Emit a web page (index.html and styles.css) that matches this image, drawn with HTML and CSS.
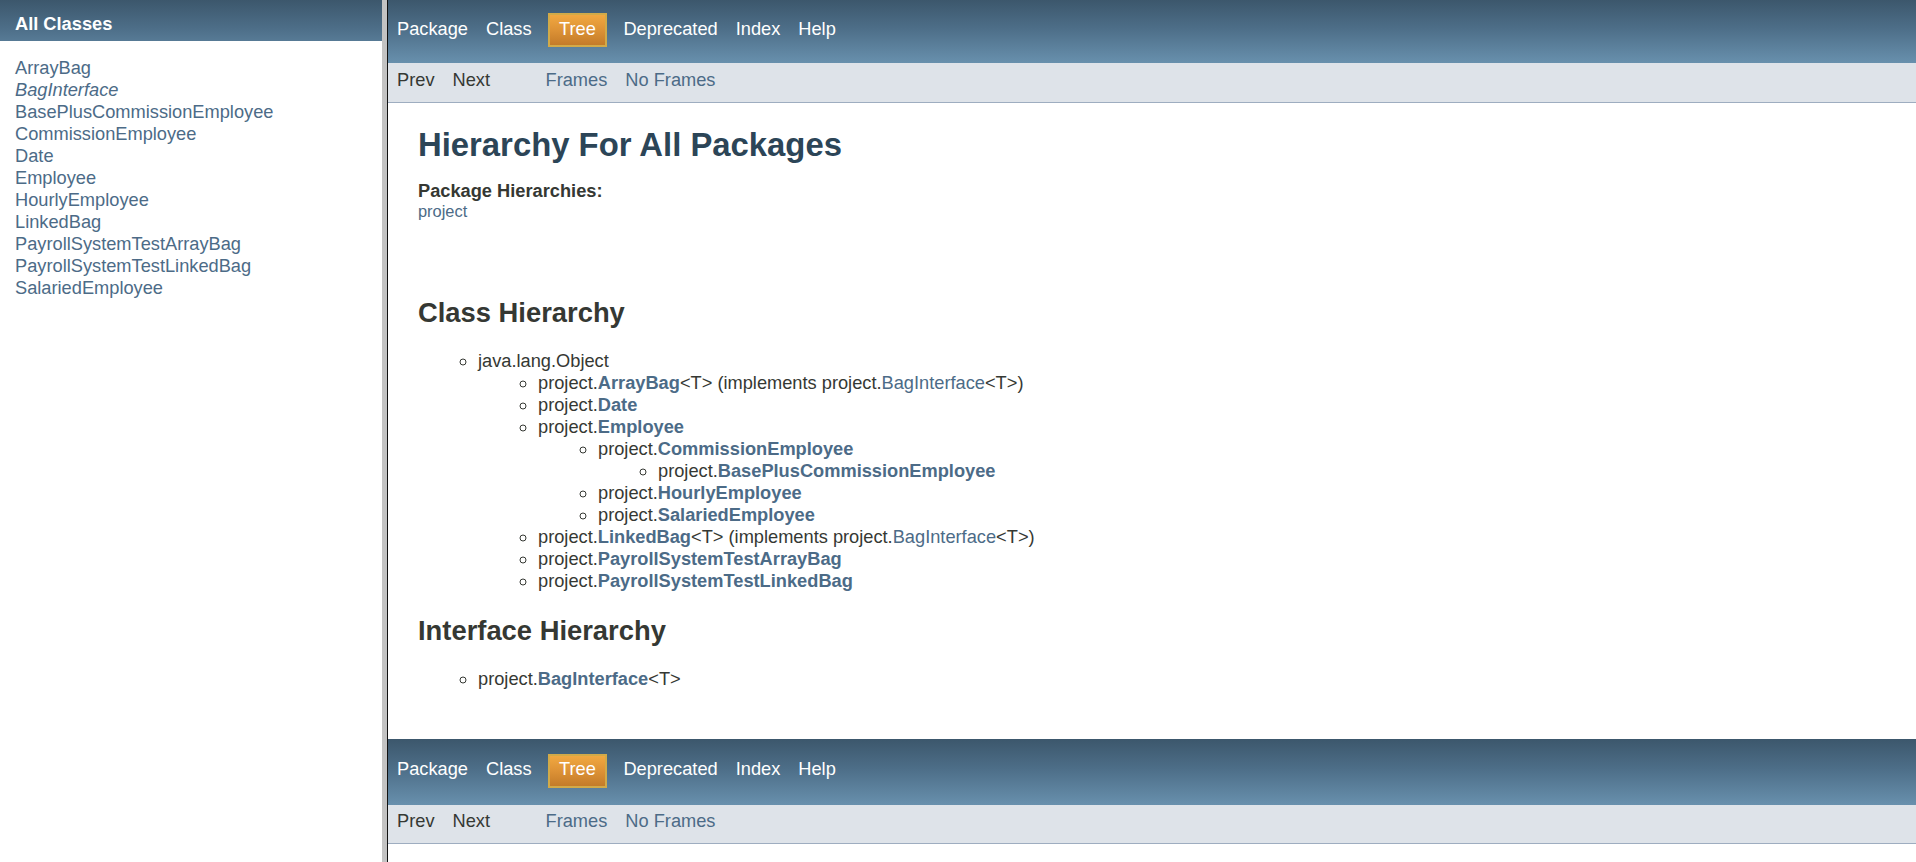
FILE: index.html
```html
<!DOCTYPE html>
<html>
<head>
<meta charset="utf-8">
<title>Class Hierarchy</title>
<link rel="stylesheet" href="styles.css">
</head>
<body>
<div class="frameset">
  <div class="frame-left">
    <h1 class="bar">All Classes</h1>
    <ul class="index-list">
      <li><a href="#">ArrayBag</a></li>
      <li><a href="#" class="iface">BagInterface</a></li>
      <li><a href="#">BasePlusCommissionEmployee</a></li>
      <li><a href="#">CommissionEmployee</a></li>
      <li><a href="#">Date</a></li>
      <li><a href="#">Employee</a></li>
      <li><a href="#">HourlyEmployee</a></li>
      <li><a href="#">LinkedBag</a></li>
      <li><a href="#">PayrollSystemTestArrayBag</a></li>
      <li><a href="#">PayrollSystemTestLinkedBag</a></li>
      <li><a href="#">SalariedEmployee</a></li>
    </ul>
  </div>
  <div class="frame-divider"></div>
  <div class="frame-right">
    <div class="top-nav">
      <ul class="nav-list">
        <li>Package</li>
        <li>Class</li>
        <li class="nav-current">Tree</li>
        <li>Deprecated</li>
        <li>Index</li>
        <li>Help</li>
      </ul>
    </div>
    <div class="sub-nav">
      <ul class="sub-list">
        <li>Prev</li>
        <li>Next</li>
      </ul>
      <ul class="sub-list">
        <li><a href="#">Frames</a></li>
        <li><a href="#">No Frames</a></li>
      </ul>
    </div>
    <div class="header">
      <h1 class="title">Hierarchy For All Packages</h1>
      <span class="strong">Package Hierarchies:</span>
      <ul class="horizontal">
        <li><a href="#">project</a></li>
      </ul>
    </div>
    <div class="content">
      <h2 class="section-title section-class">Class Hierarchy</h2>
      <ul class="tree">
        <li>java.lang.Object
          <ul class="tree">
            <li>project.<a href="#" class="cls">ArrayBag</a>&lt;T&gt; (implements project.<a href="#">BagInterface</a>&lt;T&gt;)</li>
            <li>project.<a href="#" class="cls">Date</a></li>
            <li>project.<a href="#" class="cls">Employee</a>
              <ul class="tree">
                <li>project.<a href="#" class="cls">CommissionEmployee</a>
                  <ul class="tree">
                    <li>project.<a href="#" class="cls">BasePlusCommissionEmployee</a></li>
                  </ul>
                </li>
                <li>project.<a href="#" class="cls">HourlyEmployee</a></li>
                <li>project.<a href="#" class="cls">SalariedEmployee</a></li>
              </ul>
            </li>
            <li>project.<a href="#" class="cls">LinkedBag</a>&lt;T&gt; (implements project.<a href="#">BagInterface</a>&lt;T&gt;)</li>
            <li>project.<a href="#" class="cls">PayrollSystemTestArrayBag</a></li>
            <li>project.<a href="#" class="cls">PayrollSystemTestLinkedBag</a></li>
          </ul>
        </li>
      </ul>
      <h2 class="section-title">Interface Hierarchy</h2>
      <ul class="tree">
        <li>project.<a href="#" class="cls">BagInterface</a>&lt;T&gt;</li>
      </ul>
    </div>
    <div class="bottom-nav">
      <ul class="nav-list">
        <li>Package</li>
        <li>Class</li>
        <li class="nav-current">Tree</li>
        <li>Deprecated</li>
        <li>Index</li>
        <li>Help</li>
      </ul>
    </div>
    <div class="sub-nav sub-nav-bottom">
      <ul class="sub-list">
        <li>Prev</li>
        <li>Next</li>
      </ul>
      <ul class="sub-list">
        <li><a href="#">Frames</a></li>
        <li><a href="#">No Frames</a></li>
      </ul>
    </div>
  </div>
</div>
</body>
</html>
```

FILE: styles.css
```css
html, body {
  margin: 0;
  padding: 0;
  height: 100%;
  overflow: hidden;
}

body {
  background: #ffffff;
  color: #353833;
  font-family: "Liberation Sans", Arial, Helvetica, sans-serif;
  font-size: 18.24px;
  line-height: 21.8px;
}

a {
  color: #4c6b87;
  text-decoration: none;
}

ul {
  margin: 0;
  padding: 0;
}

.frameset {
  display: flex;
  height: 100%;
}

.frame-left {
  width: 382px;
  flex: none;
  overflow: hidden;
}

.frame-divider {
  width: 5px;
  flex: none;
  background: #c3c3c3;
  border-right: 1px solid #111111;
}

.frame-right {
  flex: 1;
  overflow: hidden;
}

/* left frame */
.bar {
  margin: 0;
  height: 21px;
  padding: 13px 9px 7px 15px;
  font-size: 18.24px;
  font-weight: bold;
  line-height: 21px;
  color: #ffffff;
  background: linear-gradient(to bottom, #3c576c 0%, #4d6e88 45%, #6890ad 100%);
  background-size: 100% 63px;
  background-repeat: no-repeat;
}

.index-list {
  margin: 16px 15px;
  list-style: none;
  line-height: 22px;
}

.index-list li {
  white-space: nowrap;
}

.iface {
  font-style: italic;
}

/* nav bars */
.top-nav,
.bottom-nav {
  background: linear-gradient(to bottom, #3c576c 0%, #4d6e88 45%, #6890ad 100%);
  color: #ffffff;
  display: flex;
  align-items: flex-start;
}

.top-nav {
  height: 50px;
  padding-top: 13px;
}

.bottom-nav {
  height: 51px;
  padding-top: 15px;
  margin-top: 15px;
}

.nav-list {
  display: flex;
  align-items: center;
  list-style: none;
  height: 34px;
}

.nav-list li {
  padding: 2.5px 9px 6.5px;
  line-height: 21px;
}

.nav-list .nav-current {
  margin: 0 7.5px;
  padding: 2.5px 9px 6.5px;
  border: 2px solid #d2aa48;
  background: linear-gradient(to bottom, #f1a840 0%, #dd9236 50%, #c37b29 100%);
}

.sub-nav {
  display: flex;
  height: 33px;
  padding: 1.5px 0 4.5px;
  background: #dee3e9;
  border-bottom: 1px solid #9eadc0;
}

.sub-nav-bottom {
  height: 33px;
  padding: 1px 0 4px;
}

.sub-list {
  display: flex;
  list-style: none;
  margin-right: 37.5px;
}

.sub-list li {
  padding: 4.5px 9px;
  line-height: 21px;
}

/* header */
.header {
  margin: 0 30px;
  padding-top: 7.5px;
}

.title {
  margin: 15px 0 16px;
  font-size: 32.83px;
  line-height: normal;
  color: #2c4557;
}

.strong {
  font-weight: bold;
}

.horizontal {
  list-style: none;
  margin-top: -1px;
  margin-bottom: 36.5px;
}

.horizontal li {
  display: inline;
  font-size: 16.42px;
}

/* content */
.content {
  padding: 15px 30px;
}

.section-title {
  margin: 22.7px 0 21.7px;
  font-size: 27.36px;
  line-height: normal;
  color: #353833;
}

.section-class {
  margin-bottom: 20.7px;
}

.tree {
  list-style-type: circle;
  padding-left: 60px;
  margin: 18.24px 0;
  line-height: 22px;
}

.tree .tree {
  margin: 0;
}

.cls {
  font-weight: bold;
}
```
